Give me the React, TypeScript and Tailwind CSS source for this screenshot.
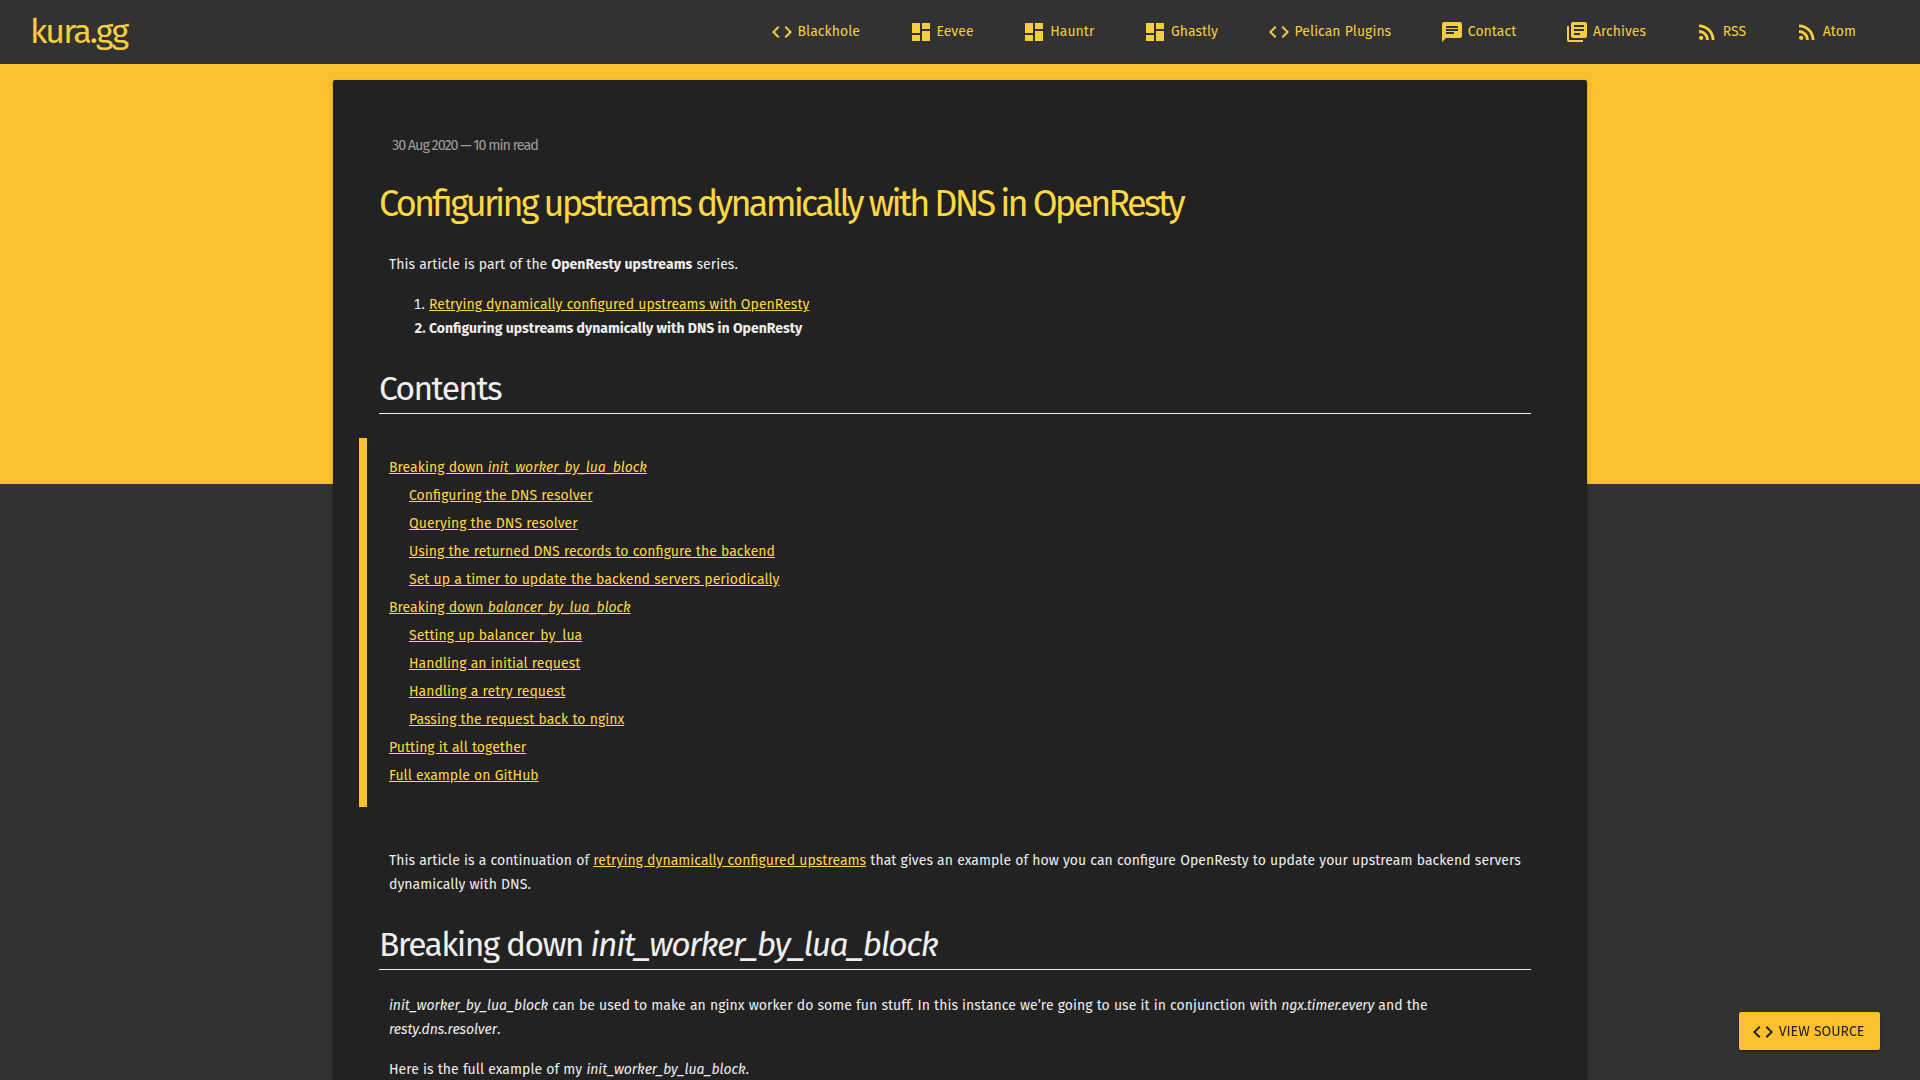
import type { ReactNode } from "react";

const icons = {
  code: "M9.4 16.6L4.8 12l4.6-4.6L8 6l-6 6 6 6 1.4-1.4zm5.2 0l4.6-4.6-4.6-4.6L16 6l6 6-6 6-1.4-1.4z",
  dashboard: "M3 13h8V3H3v10zm0 8h8v-6H3v6zm10 0h8V11h-8v10zm0-18v6h8V3h-8z",
  chat: "M20 2H4c-1.1 0-1.99.9-1.99 2L2 22l4-4h14c1.1 0 2-.9 2-2V4c0-1.1-.9-2-2-2zM6 9h12v2H6V9zm8 5H6v-2h8v2zm4-6H6V6h12v2z",
  library: "M4 6H2v14c0 1.1.9 2 2 2h14v-2H4V6zm16-4H8c-1.1 0-2 .9-2 2v12c0 1.1.9 2 2 2h12c1.1 0 2-.9 2-2V4c0-1.1-.9-2-2-2zm-1 9H9V9h10v2zm-4 4H9v-2h6v2zm4-8H9V5h10v2z",
  rss: "M6.18 15.64a2.18 2.18 0 1 0 0 4.36 2.18 2.18 0 1 0 0-4.36zM4 4.44v2.83c7.03 0 12.73 5.7 12.73 12.73h2.83c0-8.59-6.97-15.56-15.56-15.56zm0 5.66v2.83c3.9 0 7.07 3.17 7.07 7.07h2.83c0-5.47-4.43-9.9-9.9-9.9z",
};
type IconName = keyof typeof icons;

function Icon({ name }: { name: IconName }) {
  return (
    <svg viewBox="0 0 24 24" fill="currentColor" className="size-6 shrink-0">
      <path d={icons[name]} />
    </svg>
  );
}

const nav: [IconName, string][] = [
  ["code", "Blackhole"],
  ["dashboard", "Eevee"],
  ["dashboard", "Hauntr"],
  ["dashboard", "Ghastly"],
  ["code", "Pelican Plugins"],
  ["chat", "Contact"],
  ["library", "Archives"],
  ["rss", "RSS"],
  ["rss", "Atom"],
];

const toc: { nested?: boolean; label: ReactNode }[] = [
  { label: <>Breaking down <Em>init_worker_by_lua_block</Em></> },
  { nested: true, label: "Configuring the DNS resolver" },
  { nested: true, label: "Querying the DNS resolver" },
  { nested: true, label: "Using the returned DNS records to configure the backend" },
  { nested: true, label: "Set up a timer to update the backend servers periodically" },
  { label: <>Breaking down <Em>balancer_by_lua_block</Em></> },
  { nested: true, label: "Setting up balancer_by_lua" },
  { nested: true, label: "Handling an initial request" },
  { nested: true, label: "Handling a retry request" },
  { nested: true, label: "Passing the request back to nginx" },
  { label: "Putting it all together" },
  { label: "Full example on GitHub" },
];

function Em({ children }: { children: ReactNode }) {
  return <em className="tracking-[-0.06px]">{children}</em>;
}

function A({ children }: { children: ReactNode }) {
  return <a href="#" className="text-[#ffd740] underline">{children}</a>;
}

function H2({ children }: { children: ReactNode }) {
  return (
    <h2 className="mt-[22px] h-[51px] border-b border-[#eee] text-[33.6px] leading-[52px] tracking-[-1.6px] [word-spacing:0]">
      {children}
    </h2>
  );
}

export default function App() {
  return (
    <div className="h-[1080px] overflow-hidden bg-[#323232] font-['Fira_Sans','Noto_Sans',sans-serif] text-sm leading-6 tracking-[0.035px] text-[#eee] [font-feature-settings:'liga'] [word-spacing:0.4px]">
      <header className="flex h-16 items-center justify-between bg-[#323232] pr-16 pl-[30px] text-[#ffd740]">
        <a href="#" className="text-[34px] tracking-[-1.9px] opacity-95">kura.gg</a>
        <nav className="flex gap-[48.6px] opacity-95">
          {nav.map(([icon, label]) => (
            <a key={label} href="#" className="flex h-6 items-center gap-1">
              <Icon name={icon} />
              {label}
            </a>
          ))}
        </nav>
      </header>

      <div className="h-[420px] bg-[#fbc02d] pt-4">
        <article className="mx-auto h-[1200px] w-[1254px] rounded-[2px] bg-[#222] pt-[54px] pr-14 pl-[46px] shadow-[0_2px_2px_0_rgba(0,0,0,0.14),0_3px_1px_-2px_rgba(0,0,0,0.2),0_1px_5px_0_rgba(0,0,0,0.12)]">
          <p className="pl-[13px] text-[14.4px] tracking-[-1.05px] text-[#9e9e9e] [word-spacing:0]">
            30 Aug 2020 — 10 min read
          </p>
          <h1 className="mt-[22px] text-[36px] leading-[48px] tracking-[-2.77px] text-[#ffd740] [word-spacing:0]">
            Configuring upstreams dynamically with DNS in OpenResty
          </h1>
          <p className="mt-[25px] px-2.5">
            This article is part of the <strong className="[word-spacing:0]">OpenResty upstreams</strong> series.
          </p>
          <ol className="mt-4 list-decimal pl-[50px]">
            <li><A>Retrying dynamically configured upstreams with OpenResty</A></li>
            <li className="font-bold tracking-normal [word-spacing:0]">
              Configuring upstreams dynamically with DNS in OpenResty
            </li>
          </ol>

          <H2>Contents</H2>
          <ul className="mt-6 -ml-5 border-l-8 border-[#fbc02d] pt-4 pb-[17px] pl-[22px] leading-7">
            {toc.map((item, i) => (
              <li key={i} className={item.nested ? "pl-5" : ""}>
                <A>{item.label}</A>
              </li>
            ))}
          </ul>

          <p className="mt-[42px] px-2.5">
            This article is a continuation of <A>retrying dynamically configured upstreams</A> that gives an example of
            how you can configure OpenResty to update your upstream backend servers dynamically with DNS.
          </p>
          <H2>
            Breaking down <em>init_worker_by_lua_block</em>
          </H2>
          <p className="mt-6 px-2.5">
            <Em>init_worker_by_lua_block</Em> can be used to make an nginx worker do some fun stuff. In this instance
            we’re going to use it in conjunction with <em className="tracking-[-0.12px]">ngx.timer.every</em> and the{" "}
            <Em>resty.dns.resolver</Em>.
          </p>
          <p className="mt-4 px-2.5">
            Here is the full example of my <Em>init_worker_by_lua_block</Em>.
          </p>
        </article>
      </div>

      <a
        href="#"
        className="fixed right-10 bottom-[30px] flex h-[38px] w-[141px] items-center justify-center gap-1 rounded-[2px] bg-[#fbc02d] pt-px pr-1 text-[#222] shadow-[0_2px_2px_0_rgba(0,0,0,0.14),0_3px_1px_-2px_rgba(0,0,0,0.2),0_1px_5px_0_rgba(0,0,0,0.12)]"
      >
        <Icon name="code" />
        VIEW SOURCE
      </a>
    </div>
  );
}
